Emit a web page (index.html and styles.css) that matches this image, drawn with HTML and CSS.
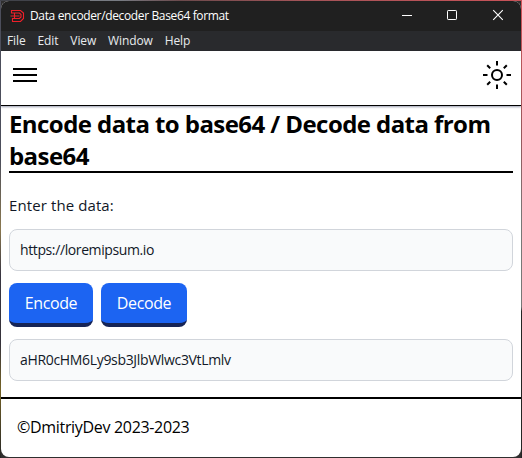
FILE: index.html
```
<!DOCTYPE html>
<html lang="en">
<head>
<meta charset="utf-8">
<title>Data encoder/decoder Base64 format</title>
<link rel="stylesheet" href="styles.css">
</head>
<body>
<div class="window">
  <div class="titlebar">
    <svg class="logo" width="15" height="14" viewBox="0 0 15 14" fill="none" stroke="#ef2029" stroke-width="1.1"><path d="M1.5 1.5h9L13.5 4v5.5L10.5 12.5H2.5V9.5h7L11 8V5.5L9.5 4H1.5zM0.5 7h9M4.5 4v5.5"/></svg>
    <span class="title">Data encoder/decoder Base64 format</span>
    <div class="controls">
      <svg width="46" height="30" viewBox="0 0 46 30"><path d="M18 14.5h10" stroke="#fff"/></svg>
      <svg width="46" height="30" viewBox="0 0 46 30"><rect x="17.5" y="9.5" width="9" height="9" rx=".7" fill="none" stroke="#fff"/></svg>
      <svg width="46" height="30" viewBox="0 0 46 30"><path d="M17.2 9.2l9.6 9.6M26.8 9.2l-9.6 9.6" stroke="#fff" stroke-width="1.1"/></svg>
    </div>
  </div>
  <nav class="menubar"><span>File</span><span>Edit</span><span>View</span><span>Window</span><span>Help</span></nav>
  <header class="header">
    <svg width="24" height="14" viewBox="0 0 24 14"><path d="M0 1h24M0 7h24M0 13h24" stroke="#000" stroke-width="2"/></svg>
    <svg width="28" height="28" viewBox="0 0 28 28" fill="none" stroke="#000" stroke-width="2"><circle cx="14" cy="14" r="5"/><path d="M14 0v4.5M14 23.5V28M0 14h4.5M23.5 14H28M4.2 4.2l3 3M20.8 20.8l3 3M4.2 23.8l3-3M20.8 7.2l3-3"/></svg>
  </header>
  <main class="main">
    <h1 class="heading">Encode data to base64 / Decode data from base64</h1>
    <div class="label">Enter the data:</div>
    <div class="field"><span class="source">https://loremipsum.io</span></div>
    <div class="actions">
      <button class="button encode">Encode</button>
      <button class="button decode">Decode</button>
    </div>
    <div class="field"><span class="result">aHR0cHM6Ly9sb3JlbWlwc3VtLmlv</span></div>
  </main>
  <footer class="footer">©DmitriyDev 2023-2023</footer>
</div>
</body>
</html>
```
FILE: styles.css
```
* { box-sizing: border-box; }
body {
  margin: 0;
  width: 522px;
  height: 458px;
  padding: 1px;
  overflow: hidden;
  font-family: "Open Sans", "Noto Sans", sans-serif;
  background:
    linear-gradient(90deg, #41434a 0 90px, #777b82 90px 120px, #6b4a4c 180px, #a35458 300px, #c95258) 0 0 / 100% 1px no-repeat,
    linear-gradient(#4c4e5b 0 35%, #8a784f 50%, #383541 60%, #35323a 75%, #746226 85%, #252525) 0 0 / 1px 100% no-repeat,
    linear-gradient(#d35358, #96585b 30%, #777 48%, #777 67%, #252525 68%) 100% 0 / 1px 100% no-repeat,
    #302f2f;
}
.window {
  width: 520px;
  height: 456px;
  border-radius: 8px;
  overflow: hidden;
  background: #fff;
  display: flex;
  flex-direction: column;
}
.titlebar {
  height: 30px;
  background: #202020;
  color: #fff;
  display: flex;
  align-items: center;
  padding-left: 9px;
  font-size: 12px;
}
.logo { margin-right: 5px; }
.title { white-space: nowrap; letter-spacing: -.36px; padding-bottom: 1px; }
.controls { margin-left: auto; display: flex; margin-right: -1px; }
.menubar {
  height: 20px;
  background: #292a2d;
  color: #e8eaed;
  font-size: 12px;
  line-height: 20px;
  letter-spacing: -.12px;
  display: flex;
  gap: 12px;
  padding-left: 6px;
}
.header {
  height: 55px;
  border-bottom: 1px solid #000;
  box-shadow: 0 1px 2px rgba(30, 40, 80, .45);
  display: flex;
  align-items: center;
  justify-content: space-between;
  padding: 0 10px 6px 12px;
}
.main { padding: 2px 8px 0; height: 291px; }
.heading {
  margin: 0;
  height: 65px;
  font-size: 24px;
  line-height: 32px;
  font-weight: 700;
  letter-spacing: -.57px;
  border-bottom: 2px solid #000;
}
.label {
  margin-top: 20px;
  height: 24px;
  line-height: 24px;
  font-size: 15px;
  font-weight: 500;
  letter-spacing: .1px;
  color: #111827;
}
.field {
  margin-top: 12px;
  height: 42px;
  line-height: 40px;
  padding: 0 10px;
  border: 1px solid #d1d5db;
  border-radius: 8px;
  background: #f9fafb;
  color: #111827;
  font-size: 14px;
}
.source { letter-spacing: -.39px; }
.result { letter-spacing: -.33px; }
.actions { display: flex; gap: 8px; margin-top: 12px; }
.button {
  height: 44px;
  padding: 0 0 1px;
  border: 0;
  border-bottom: 4px solid #162456;
  border-radius: 8px;
  background: #1c64f2;
  color: #fff;
  font: 16px "Open Sans", sans-serif;
  letter-spacing: -.4px;
}
.encode { width: 84px; }
.decode { width: 86px; }
.footer {
  flex: 1;
  border-top: 2px solid #000;
  padding: 16px;
  line-height: 24px;
  font-size: 16px;
  letter-spacing: -.32px;
}
```
